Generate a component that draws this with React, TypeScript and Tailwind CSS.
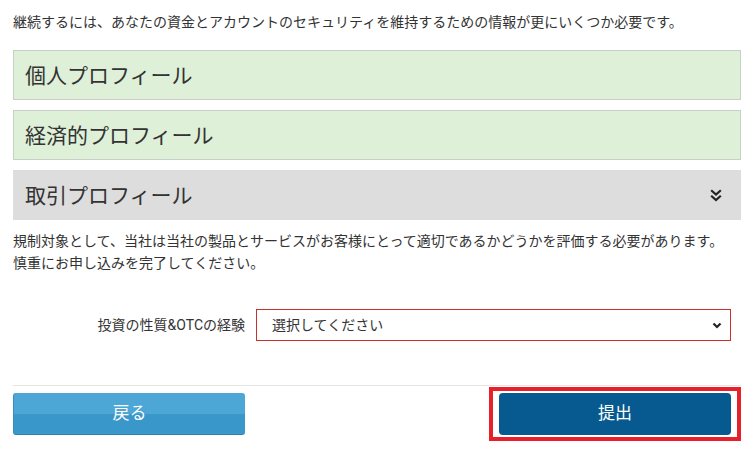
import React from "react";

const font = { fontFamily: 'Roboto, "Noto Sans CJK JP", sans-serif' };

function ChevronsDown() {
  return (
    <svg width="12" height="13" viewBox="0 0 12 13" fill="none" stroke="#222" strokeWidth="2.2" strokeLinecap="square">
      <path d="M2 2 L6 5.5 L10 2" />
      <path d="M2 7.5 L6 11 L10 7.5" />
    </svg>
  );
}

function SmallChevron() {
  return (
    <svg width="10" height="7" viewBox="0 0 10 7" fill="none" stroke="#222" strokeWidth="2.2">
      <path d="M1.5 1.5 L5 5 L8.5 1.5" />
    </svg>
  );
}

export default function App() {
  return (
    <div className="w-[753px] h-[450px] bg-white text-[#333] overflow-hidden" style={font}>
      <div className="pl-[13px] pr-[12px] pt-[12px]">
        <p className="text-[14px] leading-[20px] m-0">
          継続するには、あなたの資金とアカウントのセキュリティを維持するための情報が更にいくつか必要です。
        </p>

        <div className="mt-[18px] flex flex-col gap-[10px]">
          <div className="h-[50px] bg-[#dff0d8] border border-[#c9cfc6] flex items-center pl-[11px] pt-[4px]">
            <span className="text-[21px] text-[#333]">個人プロフィール</span>
          </div>
          <div className="h-[50px] bg-[#dff0d8] border border-[#c9cfc6] flex items-center pl-[11px] pt-[4px]">
            <span className="text-[21px] text-[#333]">経済的プロフィール</span>
          </div>
          <div className="h-[50px] bg-[#dddddd] flex items-center justify-between pl-[12px] pr-[19px]">
            <span className="text-[21px] text-[#333] pt-[4px]">取引プロフィール</span>
            <ChevronsDown />
          </div>
        </div>

        <p className="mt-[10px] text-[14px] leading-[22px] m-0">
          規制対象として、当社は当社の製品とサービスがお客様にとって適切であるかどうかを評価する必要があります。
          <br />
          慎重にお申し込みを完了してください。
        </p>

        <div className="mt-[35px] flex items-center">
          <label className="w-[243px] pr-[11px] text-right text-[14px]">投資の性質&amp;OTCの経験</label>
          <div className="w-[475px] h-[32px] border border-[#c9302c] flex items-center justify-between pl-[15px] pr-[8px] text-[14px]">
            <span>選択してください</span>
            <SmallChevron />
          </div>
        </div>

        <div className="mt-[44px] border-t border-[#e5e5e5]" />

        <div className="mt-[7px] flex justify-between pr-[10px]">
          <button className="w-[232px] h-[42px] rounded-[3px] text-white text-[17px] bg-[linear-gradient(to_bottom,#4ca6d6_0%,#4ca6d6_50%,#3a97ca_50%,#3a97ca_100%)] border-b border-[#2f80b0] border-l border-l-[#3b8dbd]">
            戻る
          </button>
          <div className="relative">
            <span className="absolute -top-[6px] -bottom-[6px] -left-[10px] -right-[10px] border-[4px] border-[#e8202a] pointer-events-none" />
            <button className="w-[232px] h-[42px] rounded-[4px] bg-[#075a8f] text-white text-[17px]">
              提出
            </button>
          </div>
        </div>
      </div>
    </div>
  );
}
